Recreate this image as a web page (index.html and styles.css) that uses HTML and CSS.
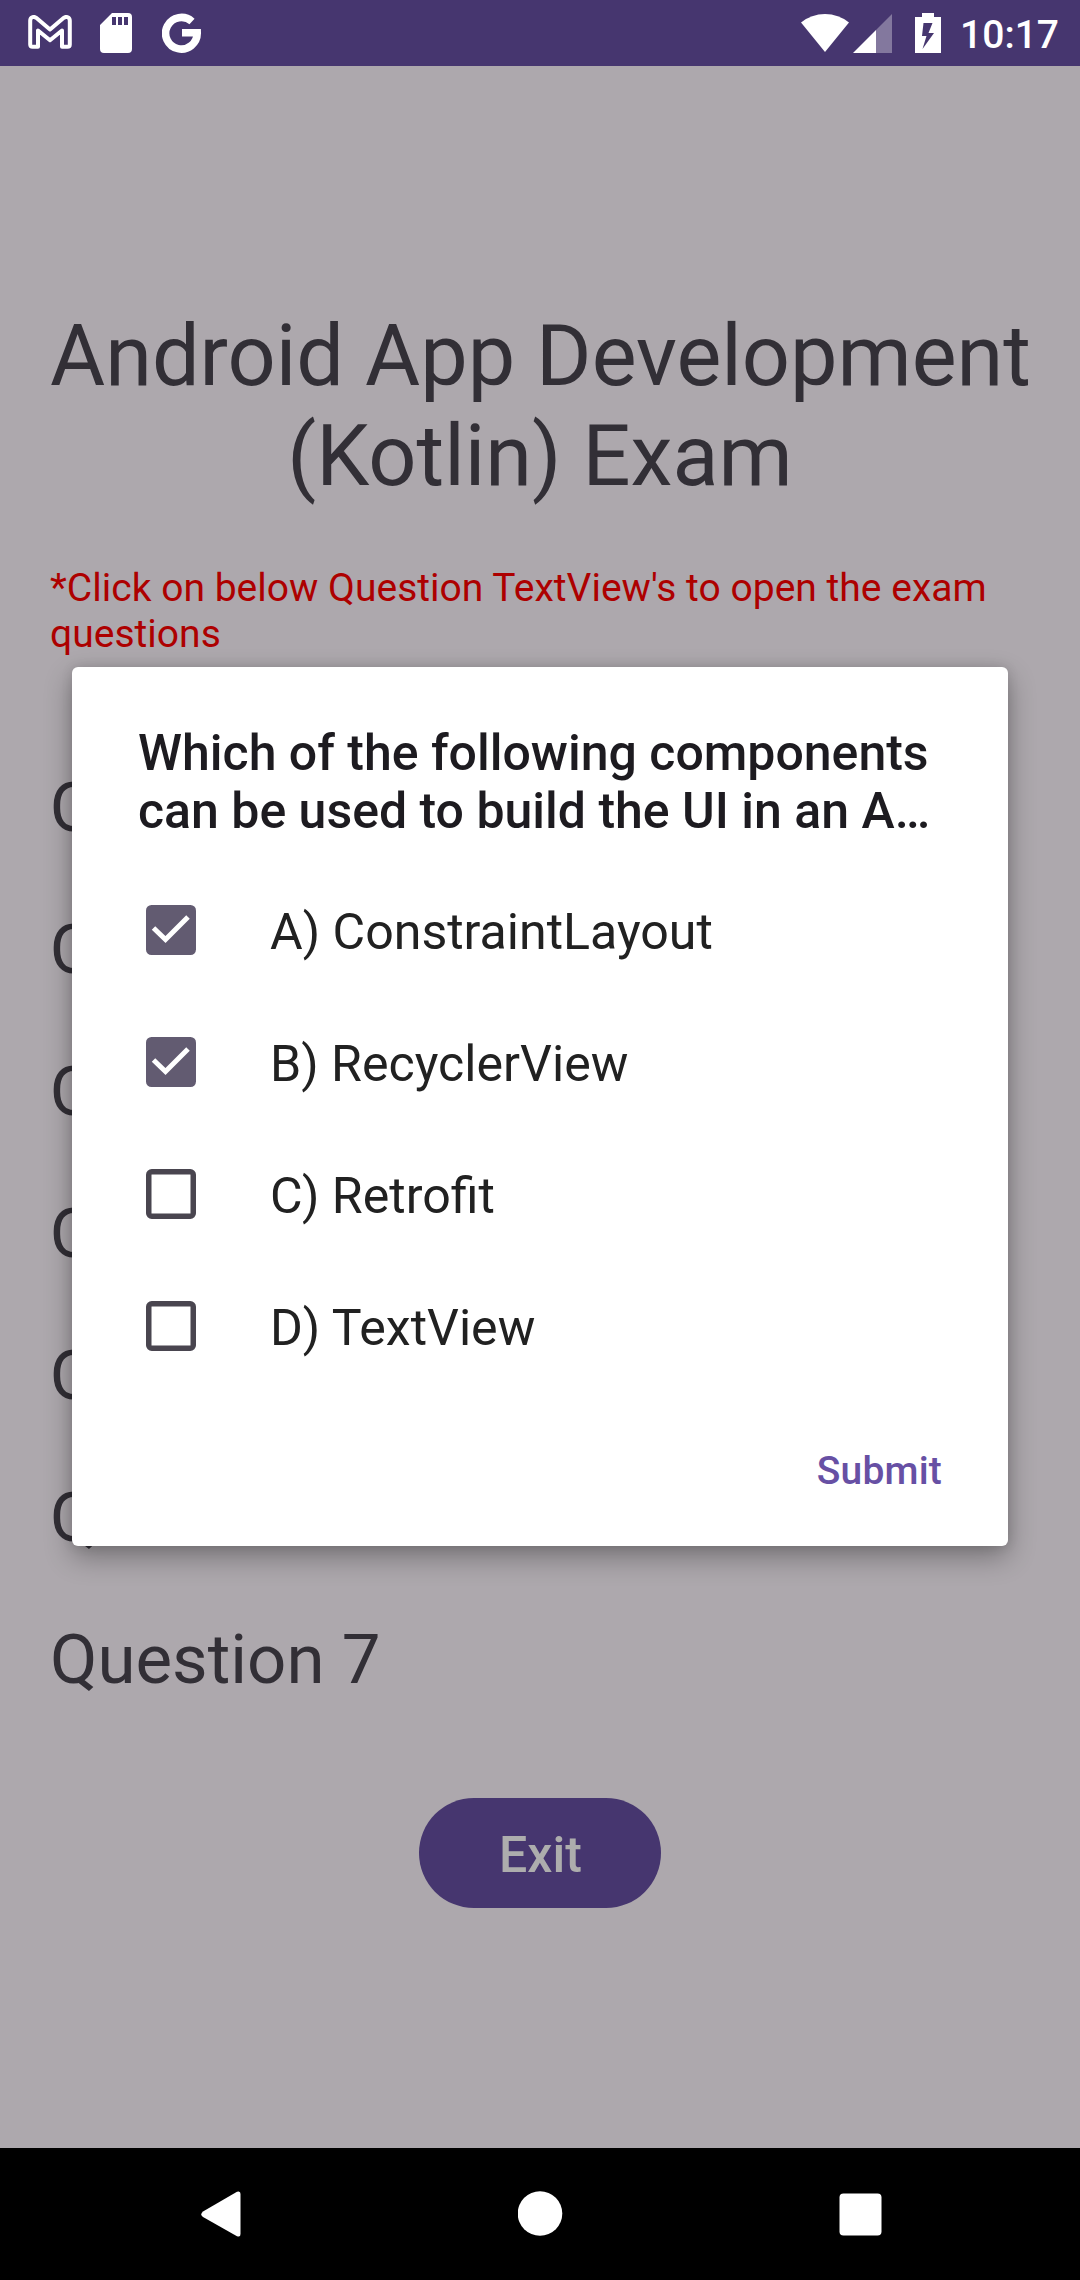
FILE: index.html
```html
<!DOCTYPE html>
<html lang="en">
<head>
<meta charset="utf-8">
<title>Android App Development (Kotlin) Exam</title>
<link rel="stylesheet" href="styles.css">
</head>
<body>
<div class="screen">
  <header class="status-bar">
    <div class="notifications">
      <svg class="icon-mail" width="44" height="34" viewBox="0 0 44 34" fill="none" stroke="#fff" stroke-width="4" stroke-linejoin="round"><path d="M2.2 29.500V5.800C2.200 2.200 5.700 1 8.200 2.800L22 14.500 35.800 2.800C38.300 1 41.800 2.200 41.800 5.800V29.500Q41.800 31.800 39.500 31.800H34V15.500L22 25.200 10 15.500V31.800H4.500Q2.200 31.800 2.200 29.500Z"/></svg>
      <svg class="icon-card" width="32" height="40" viewBox="0 0 32 40" fill="#fff" fill-rule="evenodd"><path d="M12 0H28Q32 0 32 4V36Q32 40 28 40H4Q0 40 0 36V12ZM12 4V12H16V4ZM18 4V12H22V4ZM24 4V12H28V4Z"/></svg>
      <svg class="icon-g" width="40" height="40" viewBox="0 0 40 40" fill="none" stroke="#fff" stroke-width="7.600"><path d="M30 8.500A15.800 15.800 0 1 0 35.200 19.800H20"/></svg>
    </div>
    <div class="system">
      <svg class="icon-wifi" width="48" height="38" viewBox="0 0 48 38" fill="#fff"><path d="M0 8.500Q10.500 0 24 0T48 8.500L24 38Z"/></svg>
      <svg class="icon-signal" width="39" height="39" viewBox="0 0 39 39" fill="#fff"><path fill-opacity=".33" d="M39 0V39H23V16Z"/><path d="M23 16V39H0Z"/></svg>
      <svg class="icon-battery" width="26" height="40" viewBox="0 0 26 40" fill="#fff" fill-rule="evenodd"><path d="M7 0H19V4H26V40H0V4H7ZM8.500 10L7 23H11.500L7.500 36 19 20H13.500L17.500 10Z"/></svg>
      <span class="clock">10:17</span>
    </div>
  </header>
  <main class="exam">
    <h1 class="exam-title">Android App Development<br>(Kotlin) Exam</h1>
    <p class="hint">*Click on below Question TextView's to open the exam questions</p>
    <ul class="questions">
      <li>Question 1</li>
      <li>Question 2</li>
      <li>Question 3</li>
      <li>Question 4</li>
      <li>Question 5</li>
      <li>Question 6</li>
      <li>Question 7</li>
    </ul>
    <button class="exit">Exit</button>
  </main>
  <nav class="nav-bar">
    <svg width="40" height="46" viewBox="0 0 40 46" fill="#fff"><path d="M36 .8Q39.500-.6 39.500 3V43Q39.500 46.600 36 45.200L2 26Q-1.500 23.500 2 20.500Z"/></svg>
    <svg width="45" height="46" viewBox="0 0 45 46" fill="#fff"><circle cx="22" cy="22.500" r="22.300"/></svg>
    <svg width="43" height="43" viewBox="0 0 43 43" fill="#fff"><rect x=".5" y=".5" width="42" height="42" rx="4"/></svg>
  </nav>
  <section class="dialog" role="dialog">
    <h2 class="dialog-title">Which of the following components<br>can be used to build the UI in an A…</h2>
    <ul class="options">
      <li><svg class="box" viewBox="0 0 50 50"><rect width="50" height="50" rx="5.500" fill="#625b71"/><path d="M7.500 23L19.500 34.500 42 12" fill="none" stroke="#fff" stroke-width="5"/></svg><span class="option-label">A) ConstraintLayout</span></li>
      <li><svg class="box" viewBox="0 0 50 50"><rect width="50" height="50" rx="5.500" fill="#625b71"/><path d="M7.500 23L19.500 34.500 42 12" fill="none" stroke="#fff" stroke-width="5"/></svg><span class="option-label">B) RecyclerView</span></li>
      <li><svg class="box" viewBox="0 0 50 50"><rect x="2.750" y="2.750" width="44.500" height="44.500" rx="3" fill="none" stroke="#49454f" stroke-width="5.500"/></svg><span class="option-label">C) Retrofit</span></li>
      <li><svg class="box" viewBox="0 0 50 50"><rect x="2.750" y="2.750" width="44.500" height="44.500" rx="3" fill="none" stroke="#49454f" stroke-width="5.500"/></svg><span class="option-label">D) TextView</span></li>
    </ul>
    <button class="submit">Submit</button>
  </section>
</div>
</body>
</html>
```
FILE: styles.css
```css
* { box-sizing: border-box; }

body {
  margin: 0;
  font-family: Roboto, sans-serif;
}

h1, h2, p, ul { margin: 0; padding: 0; font-weight: 400; }
li { list-style: none; }
svg { display: block; flex: none; }
button { border: 0; background: none; font-family: inherit; font-weight: 500; padding: 0; }

.screen {
  position: relative;
  display: grid;
  grid-template-columns: 1080px;
  grid-template-rows: 66px 1fr 132px;
  width: 1080px;
  height: 2280px;
  background: #ada8ad;
  overflow: hidden;
}

.status-bar {
  display: flex;
  justify-content: space-between;
  background: #46366f;
  padding: 13px 21px 0 28px;
}
.notifications, .system { display: flex; align-items: flex-start; }
.icon-mail { margin: 2px 28px 0 0; }
.icon-card { margin-right: 30px; }
.icon-wifi { margin: 1px 4px 0 0; }
.icon-signal { margin: 1px 23px 0 0; }
.icon-battery { margin-right: 19px; }
.clock {
  font-size: 39px;
  line-height: 46px;
  font-weight: 500;
  margin-top: -1px;
  color: #fff;
}

.exam {
  display: flex;
  flex-direction: column;
  padding: 241px 50px 0;
  color: #322f36;
}
.exam-title {
  font-size: 84.600px;
  line-height: 100px;
  text-align: center;
  white-space: nowrap;
}
.hint {
  margin-top: 58px;
  font-size: 39px;
  line-height: 46px;
  letter-spacing: .02px;
  color: #ad0000;
}
.questions {
  display: flex;
  flex-direction: column;
  gap: 62px;
  margin-top: 111px;
  font-size: 69px;
  line-height: 80px;
}
.exit {
  align-self: center;
  width: 242px;
  height: 110px;
  margin-top: 98px;
  padding: 4px 0 0 1px;
  border-radius: 55px;
  background: #46366f;
  color: #adadad;
  font-size: 50px;
}

.nav-bar {
  display: flex;
  align-items: center;
  justify-content: space-between;
  padding: 0 198px 0 201px;
  background: #000;
}

/* Modal question dialog over the exam page */
.dialog {
  position: absolute;
  left: 72px;
  top: 667px;
  width: 936px;
  height: 879px;
  display: flex;
  flex-direction: column;
  padding: 57px 66px 0;
  border-radius: 6px;
  background: #fff;
  box-shadow: 0 11px 28px rgba(0, 0, 0, .32), 0 0 12px rgba(0, 0, 0, .12);
}
.dialog-title {
  font-size: 50px;
  line-height: 58px;
  font-weight: 500;
  color: #1d1b20;
  white-space: nowrap;
}
.options { margin-top: 24px; }
.options li {
  display: flex;
  align-items: center;
  height: 132px;
  padding-left: 8px;
  gap: 74px;
  font-size: 50.100px;
  color: #212121;
}
.option-label { padding-top: 4px; }
.box { width: 50px; height: 50px; }
.submit {
  align-self: flex-end;
  margin-top: 46px;
  height: 66px;
  font-size: 39px;
  letter-spacing: .2px;
  color: #6750a4;
}
```
